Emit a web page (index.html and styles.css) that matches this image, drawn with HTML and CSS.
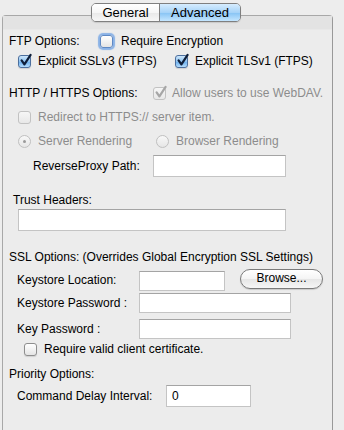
FILE: index.html
```html
<!DOCTYPE html>
<html lang="en">
<head>
  <meta charset="UTF-8" />
  <title>Advanced Options</title>
  <link rel="stylesheet" href="styles.css">
</head>
<body>

<div class="tabs">
  <div class="tab">General</div>
  <div class="tab active">Advanced</div>
</div>

<div class="panel">
  <div class="panel-head"></div>

  <div class="content">
    <div class="row ftp">
      <span class="label w-ftp">FTP Options:</span>
      <span class="cb focus"></span>
      <span class="text">Require Encryption</span>
    </div>

    <div class="row sub">
      <span class="opt w-ssl">
        <span class="cb checked"><svg viewBox="0 0 13 13"><path d="M2.6 6.4 L5.4 10.4 L11.6 0.8" /></svg></span>
        <span class="text">Explicit SSLv3 (FTPS)</span>
      </span>
      <span class="opt">
        <span class="cb checked"><svg viewBox="0 0 13 13"><path d="M2.6 6.4 L5.4 10.4 L11.6 0.8" /></svg></span>
        <span class="text">Explicit TLSv1 (FTPS)</span>
      </span>
    </div>

    <div class="row http">
      <span class="label w-http">HTTP / HTTPS Options:</span>
      <span class="cb checked disabled"><svg viewBox="0 0 13 13"><path d="M2.6 6.4 L5.4 10.4 L11.6 0.8" /></svg></span>
      <span class="text dim">Allow users to use WebDAV.</span>
    </div>

    <div class="row sub redirect">
      <span class="cb disabled"></span>
      <span class="text dim">Redirect to HTTPS:// server item.</span>
    </div>

    <div class="row sub radios">
      <span class="opt w-radio">
        <span class="radio on"></span>
        <span class="text dim">Server Rendering</span>
      </span>
      <span class="opt">
        <span class="radio"></span>
        <span class="text dim">Browser Rendering</span>
      </span>
    </div>

    <div class="row field proxy">
      <span class="label w-proxy">ReverseProxy Path:</span>
      <span class="input w-proxy-in"></span>
    </div>

    <div class="row trust-label">
      <span class="label">Trust Headers:</span>
    </div>
    <div class="row field trust">
      <span class="input w-trust"></span>
    </div>

    <div class="row ssl-title">
      <span class="label">SSL Options: (Overrides Global Encryption SSL Settings)</span>
    </div>

    <div class="row field keystore">
      <span class="label w-key">Keystore Location:</span>
      <span class="input short"></span>
      <button class="btn">Browse...</button>
    </div>

    <div class="row field keypass">
      <span class="label w-key">Keystore Password :</span>
      <span class="input long"></span>
    </div>

    <div class="row field pass">
      <span class="label w-key">Key Password :</span>
      <span class="input long"></span>
    </div>

    <div class="row cert">
      <span class="cb"></span>
      <span class="text">Require valid client certificate.</span>
    </div>

    <div class="row priority">
      <span class="label">Priority Options:</span>
    </div>

    <div class="row field command">
      <span class="label w-cmd">Command Delay Interval:</span>
      <span class="input cmd">0</span>
    </div>
  </div>
</div>

</body>
</html>
```

FILE: styles.css
```css
* {
  margin: 0;
  padding: 0;
  box-sizing: border-box;
}

html, body {
  font-family: 'Liberation Sans', Arial, sans-serif;
  font-size: 12px;
  color: #000;
  background: #ededed;
  width: 100%;
  height: 100%;
  overflow: hidden;
}

body {
  padding-top: 3px;
}

/* segmented tab control */
.tabs {
  display: flex;
  margin-left: 91px;
  width: 150px;
  height: 19px;
  border: 1px solid #7f7f7f;
  border-radius: 5px;
  overflow: hidden;
  position: relative;
  z-index: 2;
  box-shadow: 0 1px 1px rgba(0, 0, 0, 0.12);
}

.tab {
  font-size: 13px;
  line-height: 17px;
  text-align: center;
  width: 67px;
  background: linear-gradient(#ffffff 0%, #f6f6f6 50%, #e8e8e8 51%, #f7f7f7 100%);
}

.tab.active {
  flex: 1;
  border-left: 1px solid #7f7f7f;
  background: linear-gradient(#d6ecfe 0%, #a6d3f8 50%, #86c3f4 51%, #c4e6ff 100%);
}

/* main box */
.panel {
  margin-top: -7px;
  margin-left: 2px;
  width: 331px;
  height: 415px;
  border: 1px solid #a8a8a8;
  border-right-color: #999;
  border-bottom: none;
  border-radius: 4px 4px 0 0;
  background: #ececec;
}

.panel-head {
  height: 14px;
  background: #e3e3e3;
  border-bottom: 1px solid #e8e8e8;
}

.content {
  padding: 1px 0 0 6px;
}

.row {
  display: flex;
  align-items: center;
  height: 20px;
  white-space: nowrap;
}

.sub {
  padding-left: 9px;
}

.opt {
  display: flex;
  align-items: center;
}

.text {
  margin-left: 7px;
}

.dim {
  color: #8c8c8c;
}

.w-ftp { width: 91px; }
.w-ssl { width: 157px; }
.w-http { width: 144px; }
.w-radio { width: 138px; }

.ftp .text { margin-left: 8px; }
.http .text { margin-left: 6px; }

.http { margin-top: 12px; }
.redirect { margin-top: 4px; }
.radios { margin-top: 4px; }

/* checkboxes and radios */
.cb {
  display: inline-block;
  width: 13px;
  height: 13px;
  border: 1px solid #8e8e8e;
  border-radius: 3px;
  background: linear-gradient(#ffffff 0%, #f2f2f2 50%, #e4e4e4 100%);
  box-shadow: 0 1px 1px rgba(0, 0, 0, 0.12);
  position: relative;
  flex: none;
}

.cb.focus {
  border-color: #5f89c4;
  box-shadow: 0 0 1px 2px #8ab2e6;
}

.cb.checked {
  border-color: #4c6f9e;
  background: linear-gradient(#cde6fb 0%, #8fc4f2 50%, #6fb1ee 55%, #b4dcfc 100%);
}

.cb svg {
  position: absolute;
  left: 0;
  top: -2px;
  width: 13px;
  height: 13px;
  overflow: visible;
}

.cb svg path {
  fill: none;
  stroke: #0f1f3a;
  stroke-width: 2.2;
  stroke-linecap: round;
  stroke-linejoin: round;
}

.cb.disabled {
  border-color: #c2c2c2;
  background: linear-gradient(#f6f6f6, #e8e8e8);
  box-shadow: none;
}

.cb.disabled svg path {
  stroke: #a6a6a6;
}

.radio {
  display: inline-block;
  width: 13px;
  height: 13px;
  border: 1px solid #c0c0c0;
  border-radius: 50%;
  background: linear-gradient(#f8f8f8, #e6e6e6);
  position: relative;
  flex: none;
}

.radio.on::after {
  content: "";
  position: absolute;
  left: 4px;
  top: 4px;
  width: 3px;
  height: 3px;
  border-radius: 50%;
  background: #9a9a9a;
}

/* text fields */
.input {
  display: inline-block;
  height: 20px;
  background: #fff;
  border: 1px solid #c4c4c4;
  border-top-color: #a4a4a4;
  flex: none;
}

.field {
  height: 22px;
}

.proxy { margin-top: 4px; padding-left: 24px; }
.w-proxy { width: 120px; }
.w-proxy-in { width: 133px; height: 22px; }

.trust-label { margin-top: 13px; height: 19px; padding-left: 4px; }
.trust { padding-left: 9px; }
.w-trust { width: 268px; height: 22px; }

.ssl-title { margin-top: 16px; }

.keystore { margin-top: 2px; padding-left: 8px; align-items: center; }
.w-key { width: 122px; }
.keystore .input { align-self: flex-end; }
.short { width: 86px; height: 20px; }
.long { width: 152px; }

.keypass { margin-top: 2px; padding-left: 8px; height: 20px; }
.pass { margin-top: 6px; padding-left: 8px; height: 20px; }

.btn {
  align-self: flex-start;
  margin-left: 15px;
  width: 83px;
  height: 20px;
  font-family: inherit;
  font-size: 12px;
  color: #000;
  border: 1px solid #7a7a7a;
  border-radius: 10px;
  background: linear-gradient(#ffffff 0%, #f4f4f4 50%, #e6e6e6 51%, #f6f6f6 100%);
  box-shadow: 0 1px 1px rgba(0, 0, 0, 0.15);
  line-height: 16px;
  padding-bottom: 2px;
}

.cert { margin-top: 0; padding-left: 15px; }

.priority { margin-top: 5px; }

.command { margin-top: 1px; padding-left: 8px; }
.w-cmd { width: 149px; }
.cmd {
  width: 85px;
  height: 22px;
  padding-left: 5px;
  line-height: 20px;
  font-size: 12px;
}
```
